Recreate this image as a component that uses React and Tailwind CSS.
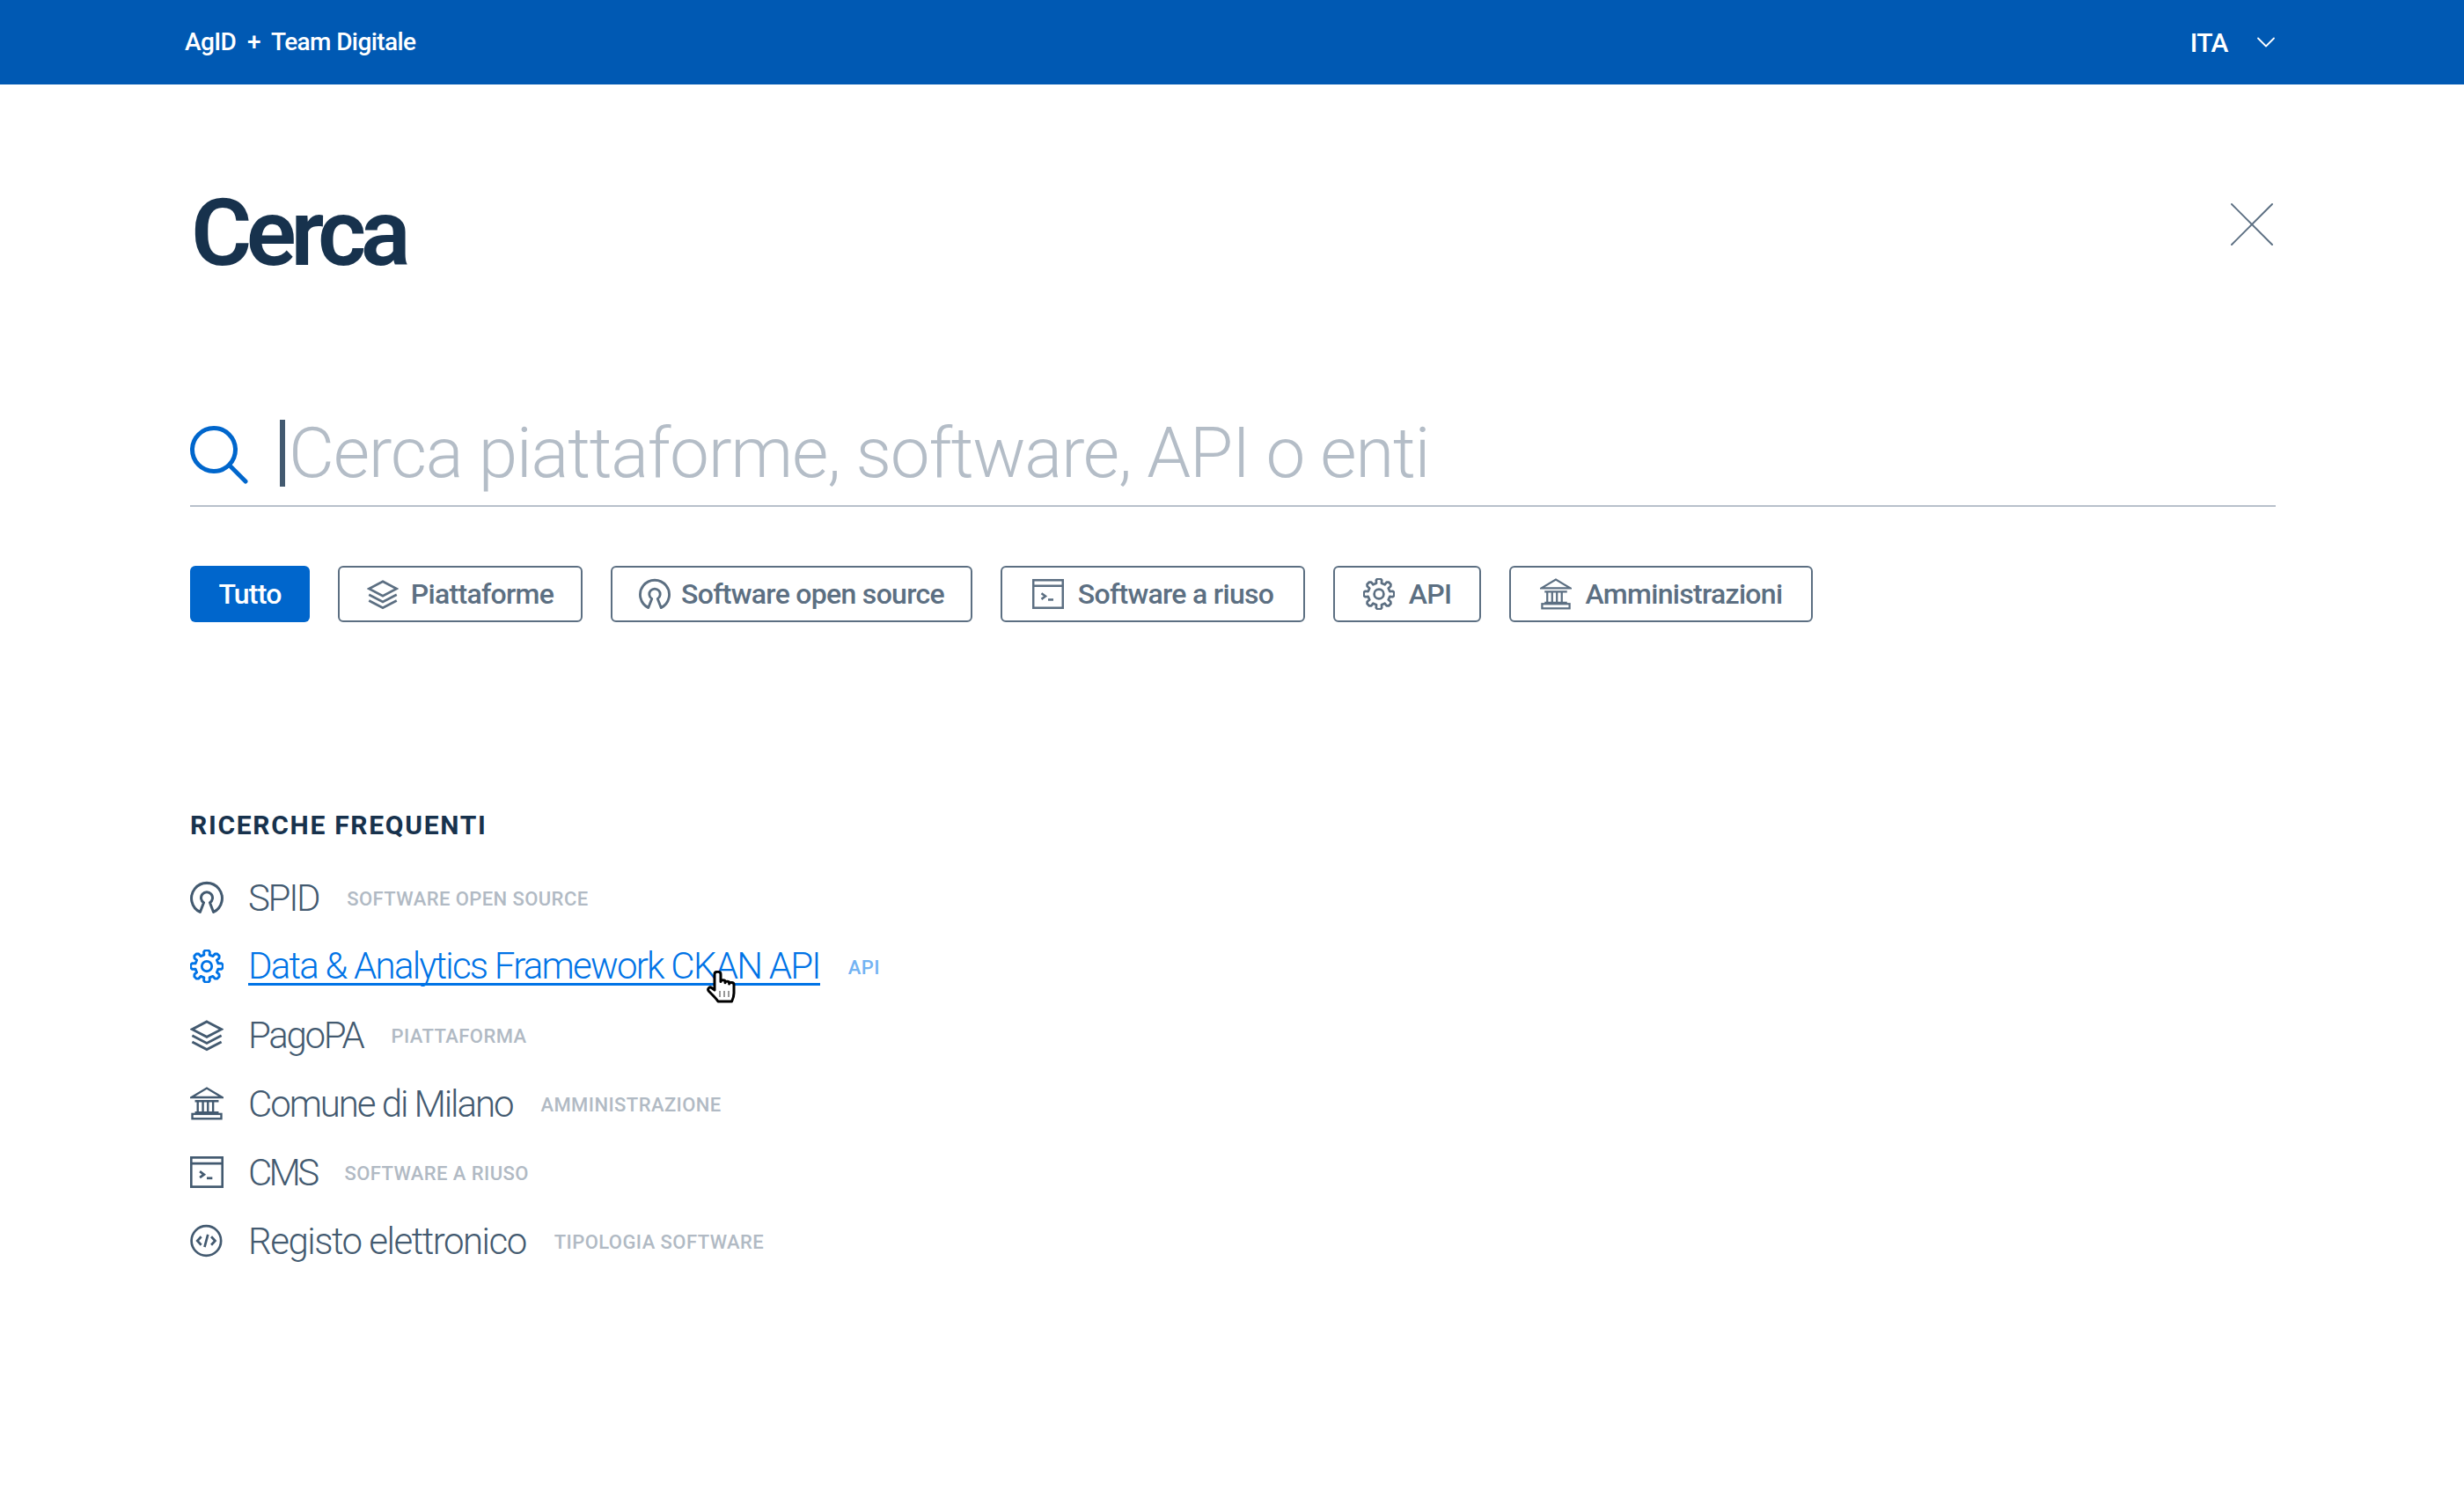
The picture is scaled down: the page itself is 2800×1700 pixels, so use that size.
import React from "react";
import { ChevronDown, X } from "lucide-react";

const gearPath = () => {
  const pts = [];
  const teeth = 8;
  for (let i = 0; i < teeth; i++) {
    const a = (i / teeth) * Math.PI * 2 - Math.PI / 2;
    const step = (Math.PI * 2) / teeth;
    [[10.6, -0.42], [11.6, -0.2], [11.6, 0.2], [10.6, 0.42]].forEach(([r, k]) => {
      pts.push([12 + r * Math.cos(a + k * step * 0.62), 12 + r * Math.sin(a + k * step * 0.62)]);
    });
    [[8.4, 0.3], [8.4, 0.7]].forEach(([r, k]) => {
      pts.push([12 + r * Math.cos(a + k * step), 12 + r * Math.sin(a + k * step)]);
    });
  }
  return "M" + pts.map((p) => p[0].toFixed(2) + " " + p[1].toFixed(2)).join("L") + "Z";
};

const Layers = ({ className }) => (
  <svg viewBox="0 0 24 24" fill="none" stroke="currentColor" strokeWidth="1.8" className={className}>
    <path d="M12 2.5 22.5 8 12 13.5 1.5 8Z" />
    <path d="M1.5 12.5 12 18l10.5-5.5" />
    <path d="M1.5 17 12 22.5 22.5 17" />
  </svg>
);

const OpenSource = ({ className }) => (
  <svg viewBox="0 0 24 24" fill="none" stroke="currentColor" strokeWidth="1.9" className={className}>
    <path d="M7.2 22.4A11 11 0 1 1 16.8 22.4L14.2 15.6a4.1 4.1 0 1 0-4.4 0Z" strokeLinejoin="round" />
  </svg>
);

const Terminal = ({ className }) => (
  <svg viewBox="0 0 24 24" fill="none" stroke="currentColor" strokeWidth="1.7" className={className}>
    <rect x="0.8" y="1.5" width="22.4" height="21" />
    <path d="M0.8 5.8h22.4" />
    <path d="M7 11.5l3 2.2-3 2.2" />
    <path d="M12 16.3h4" />
  </svg>
);

const Gear = ({ className }) => (
  <svg viewBox="0 0 24 24" fill="none" stroke="currentColor" strokeWidth="1.8" strokeLinejoin="round" className={className}>
    <path d={gearPath()} />
    <circle cx="12" cy="12" r="3.6" />
  </svg>
);

const Bank = ({ className }) => (
  <svg viewBox="0 0 24 24" fill="none" stroke="currentColor" strokeWidth="1.5" className={className}>
    <path d="M1 7.6 12 1l11 6.6Z" />
    <path d="M3.5 18.5h17M3.5 10.3h17" />
    <path d="M5.5 10.3v8M9.2 10.3v8M12.8 10.3v8M16.5 10.3v8" />
    <rect x="1.6" y="19.5" width="20.8" height="3.4" />
  </svg>
);

const CodeCircle = ({ className }) => (
  <svg viewBox="0 0 24 24" fill="none" stroke="currentColor" strokeWidth="1.7" className={className}>
    <circle cx="11.6" cy="12" r="10.6" />
    <path d="M8 9 5.2 12 8 15M15.2 9 18 12l-2.8 3M12.8 7.5l-2.4 9" />
  </svg>
);

const HandCursor = () => (
  <svg viewBox="0 0 34 38" className="absolute left-[587px] top-[44px] w-[34px] h-[38px]">
    <path
      d="M9 4c0-3.6 7-3.6 7 0v8.6c0-2.4 5-2.4 5 0v1.2c0-2.2 4.6-2.2 4.6 0v1.3c0-2.2 5.4-2.2 5.4.8v9.6c0 3.4-.8 6-2.4 9.5H13C10.5 31 6 27 2.6 23.5c-2.4-2.6.5-5.8 3-4L9 22Z"
      fill="#fff"
      stroke="#000"
      strokeWidth="3"
      strokeLinejoin="round"
    />
    <path d="M15 23v7M20 23v7M25 23v7" stroke="#333" strokeWidth="1" />
  </svg>
);

const chips = [
  { label: "Piattaforme", icon: Layers, w: "w-[278px]", gap: "gap-[14px]" },
  { label: "Software open source", icon: OpenSource, w: "w-[411px]", gap: "gap-[12px]" },
  { label: "Software a riuso", icon: Terminal, w: "w-[346px]", gap: "gap-[16px]" },
  { label: "API", icon: Gear, w: "w-[168px]", gap: "gap-[16px]" },
  { label: "Amministrazioni", icon: Bank, w: "w-[345px]", gap: "gap-[16px]" },
];

const searches = [
  { label: "SPID", tag: "Software open source", icon: OpenSource, track: "tracking-[-2.3px]" },
  { label: "Data & Analytics Framework CKAN API", tag: "API", icon: Gear, track: "tracking-[-1.76px]", active: true },
  { label: "PagoPA", tag: "Piattaforma", icon: Layers, track: "tracking-[-2.3px]" },
  { label: "Comune di Milano", tag: "Amministrazione", icon: Bank, track: "tracking-[-2.07px]" },
  { label: "CMS", tag: "Software a riuso", icon: Terminal, track: "tracking-[-3.7px]" },
  { label: "Registo elettronico", tag: "Tipologia software", icon: CodeCircle, track: "tracking-[-1.5px]" },
];

const App = () => {
  return (
    <div className="min-h-[1700px] bg-white font-['Roboto',sans-serif] text-[#17324d]">
      {/* Top bar */}
      <header className="h-[96px] bg-[#0059b3] pl-[210px] pr-[207px] flex items-center justify-between text-white">
        <div className="text-[28px] font-medium tracking-[-0.6px] whitespace-pre">AgID  +  Team Digitale</div>
        <div className="flex items-center gap-[25px]">
          <span className="text-[30px] font-medium tracking-[-0.5px]">ITA</span>
          <ChevronDown className="w-[36px] h-[36px]" strokeWidth={1.2} />
        </div>
      </header>

      <main className="pl-[216px] pr-[214px]">
        {/* Title */}
        <div className="mt-[105px] h-[128px] flex justify-between">
          <h1 className="ml-[1px] text-[106px] leading-[128px] font-semibold tracking-[-6.5px]">Cerca</h1>
          <X className="mt-[8px] w-[92px] h-[92px] -mr-[19px] text-[#5c6f82]" strokeWidth={0.5} />
        </div>

        {/* Search field */}
        <div className="mt-[121px] h-[126px] pt-[5px] border-b-2 border-[#b8c1cb] flex items-center">
          <svg viewBox="0 0 66 66" fill="none" stroke="#0066cc" strokeWidth="5" strokeLinecap="round" className="mt-[4px] w-[66px] h-[66px]">
            <circle cx="27" cy="27" r="24.5" />
            <path d="M45 45l18 18" />
          </svg>
          <div className="ml-[36px] w-[6px] h-[76px] bg-[#435a70]" />
          <span className="ml-[4px] text-[80px] font-light text-[#b4bdc7] tracking-[-1.25px]">
            Cerca piattaforme, software, API o enti
          </span>
        </div>

        {/* Filter chips */}
        <div className="mt-[67px] flex gap-[32px]">
          <button className="w-[136px] h-[64px] rounded-[6px] bg-[#0066cc] text-white text-[32px] font-medium tracking-[-0.8px]">
            Tutto
          </button>
          {chips.map((chip) => (
            <button
              key={chip.label}
              className={`${chip.w} ${chip.gap} h-[64px] rounded-[6px] border-2 border-[#5c6f82] text-[#5c6f82] text-[32px] font-medium tracking-[-0.7px] flex items-center justify-center`}
            >
              <chip.icon className="w-[36px] h-[36px]" />
              {chip.label}
            </button>
          ))}
        </div>

        {/* Frequent searches */}
        <h2 className="mt-[211px] text-[30px] leading-[40px] font-bold uppercase tracking-[1.7px]">
          Ricerche frequenti
        </h2>
        <ul className="mt-[23px]">
          {searches.map((item) => (
            <li key={item.label} className={`h-[78px] flex items-center relative ${item.active ? "text-[#0073e6]" : "text-[#435a70]"}`}>
              <item.icon className="w-[38px] h-[38px] mr-[28px]" />
              <span
                className={`text-[42px] font-light ${item.track} ${item.active ? "mt-[2px] border-b-[3px] border-[#0073e6] leading-[38px]" : ""}`}
              >
                {item.label}
              </span>
              <span className={`ml-[32px] mt-[3px] text-[22px] font-medium uppercase tracking-[0.42px] ${item.active ? "text-[#73b3f3]" : "text-[#b1bac4]"}`}>
                {item.tag}
              </span>
              {item.active && <HandCursor />}
            </li>
          ))}
        </ul>
      </main>
    </div>
  );
};

export default App;
